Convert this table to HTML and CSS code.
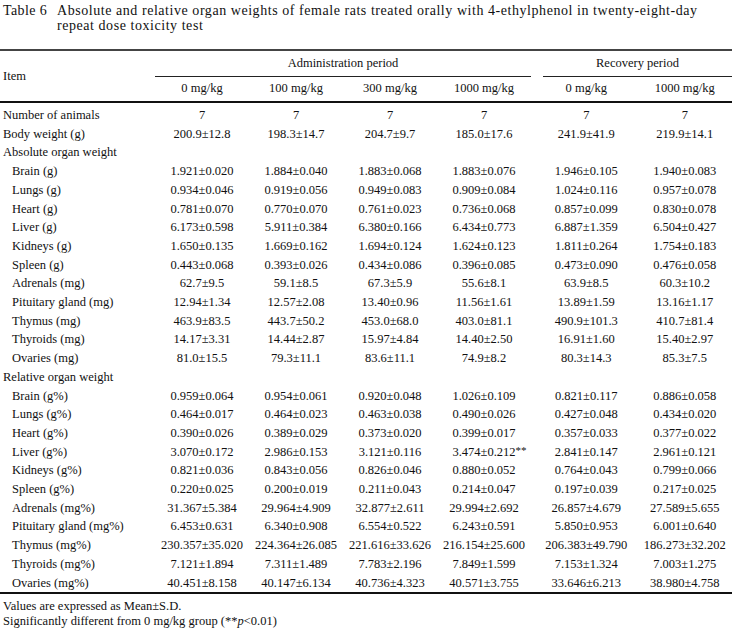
FILE: index.html
```html
<!DOCTYPE html>
<html lang="en">
<head>
<meta charset="utf-8">
<title>Table 6</title>
<link rel="stylesheet" href="styles.css">
</head>
<body>
<div class="caption">
  <span class="cap-label">Table 6</span>
  <span class="cap-text">Absolute and relative organ weights of female rats treated orally with 4-ethylphenol in <span class="nw">twenty-eight-day</span> repeat dose toxicity test</span>
</div>
<table class="tbl">
  <colgroup>
    <col class="c-item"><col class="c-d"><col class="c-d"><col class="c-d"><col class="c-d"><col class="c-gap"><col class="c-r"><col class="c-r">
  </colgroup>
  <thead>
    <tr class="h1">
      <th rowspan="2" class="item-h">Item</th>
      <th colspan="4" class="grp">Administration period</th>
      <th rowspan="2" class="gap"></th>
      <th colspan="2" class="grp">Recovery period</th>
    </tr>
    <tr class="h2">
      <th>0 mg/kg</th><th>100 mg/kg</th><th>300 mg/kg</th><th>1000 mg/kg</th>
      <th class="r1">0 mg/kg</th><th>1000 mg/kg</th>
    </tr>
  </thead>
  <tbody>
    <tr class="first"><td class="lbl">Number of animals</td><td>7</td><td>7</td><td>7</td><td>7</td><td></td><td class="r1">7</td><td>7</td></tr>
    <tr><td class="lbl">Body weight (g)</td><td>200.9±12.8</td><td>198.3±14.7</td><td>204.7±9.7</td><td>185.0±17.6</td><td></td><td class="r1">241.9±41.9</td><td>219.9±14.1</td></tr>
    <tr><td class="lbl" colspan="8">Absolute organ weight</td></tr>
    <tr><td class="lbl sub">Brain (g)</td><td>1.921±0.020</td><td>1.884±0.040</td><td>1.883±0.068</td><td>1.883±0.076</td><td></td><td class="r1">1.946±0.105</td><td>1.940±0.083</td></tr>
    <tr><td class="lbl sub">Lungs (g)</td><td>0.934±0.046</td><td>0.919±0.056</td><td>0.949±0.083</td><td>0.909±0.084</td><td></td><td class="r1">1.024±0.116</td><td>0.957±0.078</td></tr>
    <tr><td class="lbl sub">Heart (g)</td><td>0.781±0.070</td><td>0.770±0.070</td><td>0.761±0.023</td><td>0.736±0.068</td><td></td><td class="r1">0.857±0.099</td><td>0.830±0.078</td></tr>
    <tr><td class="lbl sub">Liver (g)</td><td>6.173±0.598</td><td>5.911±0.384</td><td>6.380±0.166</td><td>6.434±0.773</td><td></td><td class="r1">6.887±1.359</td><td>6.504±0.427</td></tr>
    <tr><td class="lbl sub">Kidneys (g)</td><td>1.650±0.135</td><td>1.669±0.162</td><td>1.694±0.124</td><td>1.624±0.123</td><td></td><td class="r1">1.811±0.264</td><td>1.754±0.183</td></tr>
    <tr><td class="lbl sub">Spleen (g)</td><td>0.443±0.068</td><td>0.393±0.026</td><td>0.434±0.086</td><td>0.396±0.085</td><td></td><td class="r1">0.473±0.090</td><td>0.476±0.058</td></tr>
    <tr><td class="lbl sub">Adrenals (mg)</td><td>62.7±9.5</td><td>59.1±8.5</td><td>67.3±5.9</td><td>55.6±8.1</td><td></td><td class="r1">63.9±8.5</td><td>60.3±10.2</td></tr>
    <tr><td class="lbl sub">Pituitary gland (mg)</td><td>12.94±1.34</td><td>12.57±2.08</td><td>13.40±0.96</td><td>11.56±1.61</td><td></td><td class="r1">13.89±1.59</td><td>13.16±1.17</td></tr>
    <tr><td class="lbl sub">Thymus (mg)</td><td>463.9±83.5</td><td>443.7±50.2</td><td>453.0±68.0</td><td>403.0±81.1</td><td></td><td class="r1">490.9±101.3</td><td>410.7±81.4</td></tr>
    <tr><td class="lbl sub">Thyroids (mg)</td><td>14.17±3.31</td><td>14.44±2.87</td><td>15.97±4.84</td><td>14.40±2.50</td><td></td><td class="r1">16.91±1.60</td><td>15.40±2.97</td></tr>
    <tr><td class="lbl sub">Ovaries (mg)</td><td>81.0±15.5</td><td>79.3±11.1</td><td>83.6±11.1</td><td>74.9±8.2</td><td></td><td class="r1">80.3±14.3</td><td>85.3±7.5</td></tr>
    <tr><td class="lbl" colspan="8">Relative organ weight</td></tr>
    <tr><td class="lbl sub">Brain (g%)</td><td>0.959±0.064</td><td>0.954±0.061</td><td>0.920±0.048</td><td>1.026±0.109</td><td></td><td class="r1">0.821±0.117</td><td>0.886±0.058</td></tr>
    <tr><td class="lbl sub">Lungs (g%)</td><td>0.464±0.017</td><td>0.464±0.023</td><td>0.463±0.038</td><td>0.490±0.026</td><td></td><td class="r1">0.427±0.048</td><td>0.434±0.020</td></tr>
    <tr><td class="lbl sub">Heart (g%)</td><td>0.390±0.026</td><td>0.389±0.029</td><td>0.373±0.020</td><td>0.399±0.017</td><td></td><td class="r1">0.357±0.033</td><td>0.377±0.022</td></tr>
    <tr><td class="lbl sub">Liver (g%)</td><td>3.070±0.172</td><td>2.986±0.153</td><td>3.121±0.116</td><td>3.474±0.212<span class="sig">**</span></td><td></td><td class="r1">2.841±0.147</td><td>2.961±0.121</td></tr>
    <tr><td class="lbl sub">Kidneys (g%)</td><td>0.821±0.036</td><td>0.843±0.056</td><td>0.826±0.046</td><td>0.880±0.052</td><td></td><td class="r1">0.764±0.043</td><td>0.799±0.066</td></tr>
    <tr><td class="lbl sub">Spleen (g%)</td><td>0.220±0.025</td><td>0.200±0.019</td><td>0.211±0.043</td><td>0.214±0.047</td><td></td><td class="r1">0.197±0.039</td><td>0.217±0.025</td></tr>
    <tr><td class="lbl sub">Adrenals (mg%)</td><td>31.367±5.384</td><td>29.964±4.909</td><td>32.877±2.611</td><td>29.994±2.692</td><td></td><td class="r1">26.857±4.679</td><td>27.589±5.655</td></tr>
    <tr><td class="lbl sub">Pituitary gland (mg%)</td><td>6.453±0.631</td><td>6.340±0.908</td><td>6.554±0.522</td><td>6.243±0.591</td><td></td><td class="r1">5.850±0.953</td><td>6.001±0.640</td></tr>
    <tr><td class="lbl sub">Thymus (mg%)</td><td>230.357±35.020</td><td>224.364±26.085</td><td>221.616±33.626</td><td>216.154±25.600</td><td></td><td class="r1">206.383±49.790</td><td>186.273±32.202</td></tr>
    <tr><td class="lbl sub">Thyroids (mg%)</td><td>7.121±1.894</td><td>7.311±1.489</td><td>7.783±2.196</td><td>7.849±1.599</td><td></td><td class="r1">7.153±1.324</td><td>7.003±1.275</td></tr>
    <tr><td class="lbl sub">Ovaries (mg%)</td><td>40.451±8.158</td><td>40.147±6.134</td><td>40.736±4.323</td><td>40.571±3.755</td><td></td><td class="r1">33.646±6.213</td><td>38.980±4.758</td></tr>
  </tbody>
</table>
<div class="notes">
  <p>Values are expressed as Mean±S.D.</p>
  <p>Significantly different from 0 mg/kg group (**<i>p</i>&lt;0.01)</p>
</div>
</body>
</html>
```

FILE: styles.css
```css
html, body {
  margin: 0;
  padding: 0;
  background: #fff;
}
body {
  width: 732px;
  color: #111;
  font-family: "Liberation Serif", "Times New Roman", serif;
  font-size: 12.5px;
}
.caption {
  display: flex;
  padding: 3px 0 0 3px;
  font-size: 14px;
  line-height: 15px;
  letter-spacing: 0.55px;
}
.cap-label {
  flex: 0 0 54px;
  letter-spacing: 0.4px;
}
.cap-text {
  flex: 1;
  padding-right: 20px;
}
.nw {
  white-space: nowrap;
}
.tbl {
  margin-top: 16px;
  width: 732px;
  table-layout: fixed;
  border-collapse: collapse;
  border-top: 2px solid #444;
  border-bottom: 2px solid #111;
}
.c-item { width: 155px; }
.c-d { width: 94px; }
.c-gap { width: 12px; }
.c-r { width: 94.5px; }
.tbl thead {
  border-bottom: 2px solid #111;
}
.tbl th {
  font-weight: normal;
  padding: 0;
  text-align: center;
  vertical-align: middle;
  white-space: nowrap;
}
.tbl .item-h {
  text-align: left;
  padding-left: 3px;
}
.h1 { height: 26px; }
.h2 { height: 26px; }
.tbl .grp {
  border-bottom: 1px solid #222;
}
.tbl td {
  padding: 0;
  text-align: center;
  white-space: nowrap;
  line-height: 18.7px;
}
.tbl .r1 {
  padding-right: 8px;
}
.tbl tr.first td {
  padding-top: 3px;
}
.tbl td.lbl {
  text-align: left;
  padding-left: 3px;
}
.tbl td.sub {
  padding-left: 12px;
}
.sig {
  display: inline-block;
  width: 0;
  line-height: 1;
  vertical-align: 2px;
  font-size: 11px;
}
.notes {
  padding: 5px 0 0 3px;
  line-height: 15px;
}
.notes p {
  margin: 0;
}
```
